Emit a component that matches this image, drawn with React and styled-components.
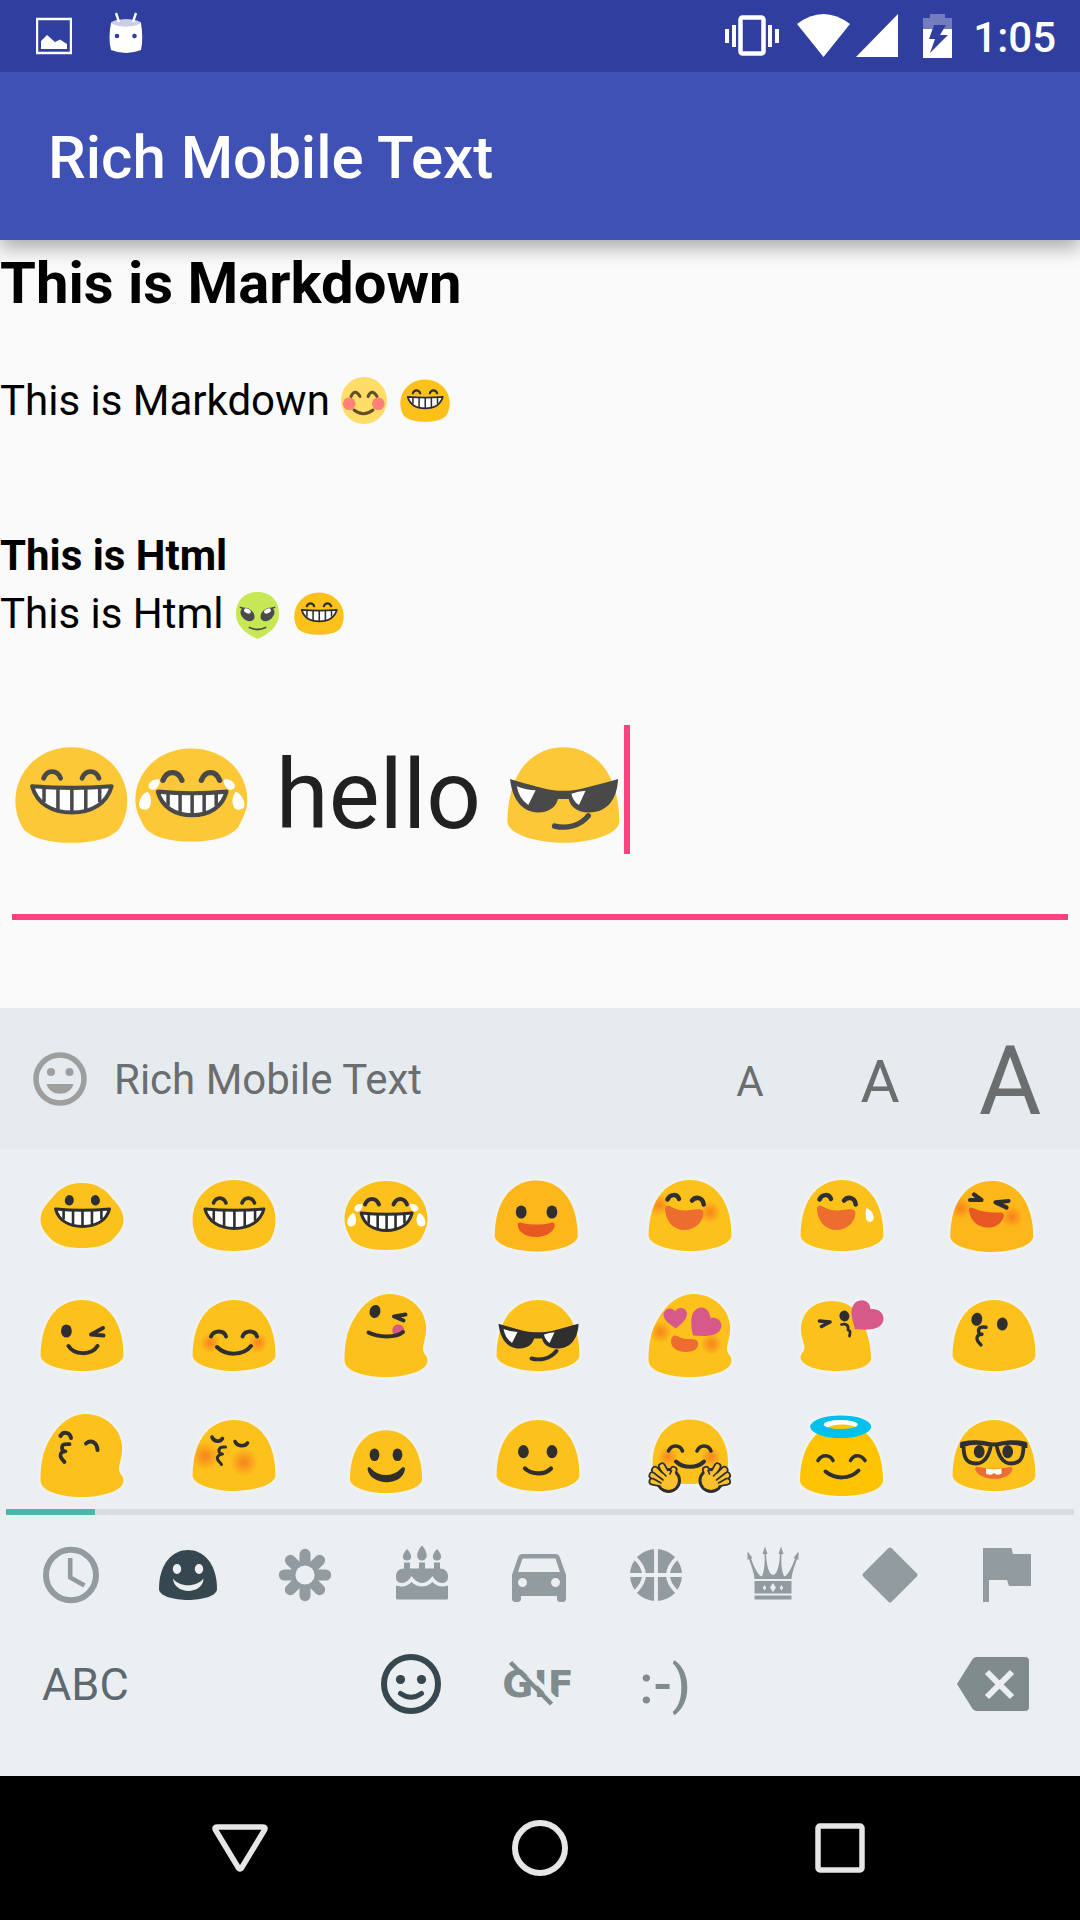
import React from "react";
import styled, { createGlobalStyle, css } from "styled-components";

const GlobalStyle = createGlobalStyle`
  * { box-sizing: border-box; }
  body { margin: 0; background: #fafafa; font-family: Roboto, "Noto Sans", sans-serif; }
  h1, h2, h3, p { margin: 0; }
`;

const INK = "#2f2f2f";
const BODY = "#fdc11b";
const BODY_WARM = "#fdb71a";

/* ---------- layout ---------- */

const Screen = styled.div`
  min-height: 100vh;
  display: flex;
  flex-direction: column;
`;

const StatusBar = styled.header`
  position: relative;
  z-index: 1;
  display: flex;
  align-items: center;
  justify-content: space-between;
  height: 72px;
  padding: 0 24px 0 36px;
  background: #303f9f;
  color: #fff;
`;

const StatusGroup = styled.div`
  display: flex;
  align-items: center;
  gap: ${(p) => p.$gap}px;
  svg { display: block; }
`;

const Clock = styled.time`
  padding-top: 3px;
  font-size: 42px;
  font-weight: 500;
  line-height: 72px;
`;

const AppBar = styled.div`
  position: relative;
  display: flex;
  align-items: center;
  height: 168px;
  padding: 4px 48px 0;
  background: #3f51b5;
  box-shadow: 0 8px 18px rgba(0, 0, 0, 0.32);
`;

const AppTitle = styled.h1`
  color: #fff;
  font-size: 60px;
  font-weight: 500;
  line-height: 72px;
`;

const Content = styled.main`
  flex: 1;
  padding-top: 8px;
  color: #000;
`;

const MarkdownBlock = styled.section`
  display: flex;
  flex-direction: column;
  gap: 54px;
  margin-bottom: 97px;
`;

const MarkdownHeading = styled.h2`
  font-size: 58px;
  font-weight: 700;
  line-height: 70px;
`;

const HtmlBlock = styled.section`
  margin-bottom: 82px;
`;

const HtmlHeading = styled.h3`
  font-size: 42px;
  font-weight: 700;
  line-height: 58px;
`;

const Line = styled.p`
  display: flex;
  align-items: center;
  gap: 10px;
  font-size: 42px;
  line-height: 58px;
  svg { display: block; }
`;

const Field = styled.label`
  display: flex;
  align-items: center;
  height: 195px;
  margin: 0 12px;
  padding-bottom: 49px;
  border-bottom: 6px solid #ff4081;
  svg { display: block; flex: none; opacity: 0.87; }
`;

const FieldInput = styled.input`
  width: 252px;
  height: 140px;
  padding: 0;
  border: 0;
  outline: 0;
  background: none;
  color: #212121;
  font: 400 96px Roboto, "Noto Sans", sans-serif;
`;

const Caret = styled.span`
  align-self: flex-start;
  width: 6px;
  height: 129px;
  background: #ff4081;
`;

const Keyboard = styled.section`
  background: #ebeff2;
  padding-bottom: 43px;
`;

const reset = css`
  display: flex;
  align-items: center;
  justify-content: center;
  margin: 0;
  padding: 0;
  border: 0;
  background: none;
  font-family: inherit;
  svg { display: block; }
`;

const SuggestionBar = styled.div`
  display: flex;
  align-items: center;
  height: 141px;
  padding: 0 5px 0 33px;
  background: #e5ebef;
  color: #6b6d6f;
`;

const AppName = styled.span`
  flex: 1;
  margin-left: 27px;
  padding-top: 2px;
  font-size: 42px;
  line-height: 58px;
`;

const SizeButton = styled.button`
  ${reset}
  width: 130px;
  height: 141px;
  padding-top: 5px;
  color: #6b6d6f;
  font-size: ${(p) => p.$size}px;
`;

const EmojiGrid = styled.div`
  display: grid;
  grid-template-columns: repeat(7, 1fr);
  grid-auto-rows: 120px;
  padding: 0 10px 0 6px;
`;

const EmojiKey = styled.button`
  ${reset}
  svg { filter: drop-shadow(0 0 3px rgba(255, 255, 255, 0.6)); }
`;

const PageTrack = styled.div`
  display: flex;
  height: 6px;
  margin: 0 6px;
  background: #dadddf;
`;

const PageThumb = styled.div`
  flex: 0 0 calc(100% / 12);
  background: #4bb6ac;
`;

const CategoryBar = styled.nav`
  display: grid;
  grid-template-columns: repeat(9, 1fr);
  height: 120px;
  padding: 0 14px 0 12px;
`;

const CategoryButton = styled.button`
  ${reset}
  color: ${(p) => (p.$active ? "#37474f" : "#929ba0")};
`;

const ModeBar = styled.div`
  display: grid;
  grid-template-columns: 1fr auto 1fr;
  align-items: center;
  height: 98px;
  padding: 0 46px 0 42px;
`;

const ModeGroup = styled.div`
  display: flex;
`;

const ModeButton = styled.button`
  ${reset}
  position: relative;
  width: 127px;
  height: 98px;
  color: ${(p) => (p.$active ? "#37474f" : "#808b8e")};
  font-size: 54px;
  font-weight: 500;
`;

const GifButton = styled(ModeButton)`
  font-family: "DejaVu Sans", sans-serif;
  font-size: 38px;
  font-weight: 700;
`;

const Slash = styled.svg`
  position: absolute;
  inset: 0;
`;

const EdgeButton = styled.button`
  ${reset}
  justify-self: ${(p) => p.$side};
  height: 98px;
  color: ${(p) => p.$color};
  font-size: 45px;
`;

const NavBar = styled.nav`
  display: flex;
  justify-content: center;
  height: 144px;
  background: #000;
`;

const NavButton = styled.button`
  ${reset}
  width: 300px;
  color: #e6e6e6;
`;

const Defs = styled.svg`
  position: absolute;
`;

/* ---------- emoji parts ---------- */

const DOME = "M0 -29C21 -29 41 -13 41.5 26C41.5 36 19 42 0 42C-19 42 -41.5 36 -41.5 26C-41 -13 -21 -29 0 -29Z";
const ROUND = "M0 -29C25 -29 41.5 -10 41.5 11C41.5 19 39 26 36 31C30 39 15 42 0 42C-15 42 -30 39 -36 31C-39 26 -41.5 19 -41.5 11C-41.5 -10 -25 -29 0 -29Z";
const LEAN = "M3 -35C24 -35 39 -20 40 -3C41 6 37 14 37 20C37 25 41.5 26 41.5 32C41 42 20 48 0 48C-22 48 -41 42 -41.5 32C-41.5 14 -39 2 -32 -10C-23 -26 -10 -35 3 -35Z";

const Dome = ({ fill = BODY }) => <path d={DOME} fill={fill} />;
const Eye = ({ x, y, rx = 5.4, ry = 6.6, tilt = 0 }) => (
  <ellipse cx={x} cy={y} rx={rx} ry={ry} fill={INK} transform={`rotate(${tilt} ${x} ${y})`} />
);
const Stroke = ({ d, w = 4 }) => (
  <path d={d} fill="none" stroke={INK} strokeWidth={w} strokeLinecap="round" strokeLinejoin="round" />
);
const Blush = ({ x, y, r = 11, within = "dome" }) => (
  <circle cx={x} cy={y} r={r} fill="url(#blush)" clipPath={`url(#${within})`} />
);

const SharedDefs = () => (
  <Defs width="0" height="0" aria-hidden="true">
    <defs>
      <radialGradient id="blush">
        <stop offset="0.15" stopColor="#f4661f" stopOpacity="0.58" />
        <stop offset="1" stopColor="#f4661f" stopOpacity="0" />
      </radialGradient>
      <clipPath id="dome"><path d={DOME} /></clipPath>
      <clipPath id="lean"><path d={LEAN} /></clipPath>
    </defs>
  </Defs>
);

const Teeth = ({ x = 0, y = 0, w = 30, h = 20 }) => {
  const at = (k) => x + k * w;
  return (
    <g stroke={INK} strokeWidth="3" strokeLinejoin="round">
      <path
        d={`M${at(-1)} ${y}Q${x} ${y + 2.4} ${at(1)} ${y}C${at(0.88)} ${y + h * 0.66} ${at(0.5)} ${y + h} ${x} ${y + h}C${at(-0.5)} ${y + h} ${at(-0.88)} ${y + h * 0.66} ${at(-1)} ${y}Z`}
        fill="#fff"
      />
      <path
        fill="none"
        strokeWidth="2.6"
        d={`M${x} ${y + 1}V${y + h}M${at(0.35)} ${y + 1}V${y + h * 0.92}M${at(-0.35)} ${y + 1}V${y + h * 0.92}M${at(0.7)} ${y + 1}V${y + h * 0.6}M${at(-0.7)} ${y + 1}V${y + h * 0.6}`}
      />
    </g>
  );
};

const Grin = () => (
  <g>
    <path d={ROUND} fill={BODY} />
    <Stroke w={3.6} d="M-20.5 -6C-18 -12.5 -10.5 -12.5 -8 -6M8 -6C10.5 -12.5 18 -12.5 20.5 -6" />
    <Teeth x={0.4} y={0} w={29.5} h={19.5} />
  </g>
);

const Tears = () => (
  <g fill="#fff">
    <path d="M-23.5 -5C-23 -1 -26 3 -29 2.6C-32 2 -32.5 -1 -30.5 -3C-29 -4.5 -26 -5.5 -23.5 -5Z" />
    <path d="M-32.4 4C-30 6 -29 12 -31 15.5C-33 18.5 -38.5 18 -38.8 14C-39 10 -36 5 -32.4 4Z" />
  </g>
);

const Joy = () => (
  <g>
    <path d="M0 -28C25 -28 41.5 -10 41.5 10C41.5 18 38 24 35 30C29 38 15 41 0 41C-15 41 -29 38 -35 30C-38 24 -41.5 18 -41.5 10C-41.5 -10 -25 -28 0 -28Z" fill={BODY} />
    <Stroke d="M-21 -4.5C-18 -12 -10 -12 -7 -4.5M7.5 -4.5C10.5 -12 18 -12 21 -4.5" />
    <Teeth x={0.6} y={4} w={25.5} h={17.5} />
    <Tears />
    <g transform="translate(0.6 0) scale(-1 1)"><Tears /></g>
  </g>
);

const Cool = () => (
  <g>
    <Dome />
    <path d="M-39.5 -5.3C-25 -1 -12 3 -4 3.3H4C12 3 25 -1 40.6 -5.3C40 8 34 19.5 19 19.5C9 19.5 5 14 4 9.5H-4C-5 14 -9 19.5 -19 19.5C-30 19.5 -38 10 -39.5 -5.3Z" fill={INK} />
    <path d="M-34.5 0Q-27 3 -20.5 3L-26 14Q-33 9 -34.5 0ZM6 5.5Q11 3.6 16.5 3.3L11.6 14Q7 11 6 5.5Z" fill="#fff" />
    <Stroke d="M-6.5 29.5C2 31.5 12 30 18.5 22" />
  </g>
);

const LaughEyes = () => (
  <Stroke w={4.5} d="M-22.5 -9.5C-20 -15 -13 -15.5 -11 -10M2 -8.5C6 -13 13 -11.5 13.7 -4.5" />
);
const LaughMouth = ({ fill = "#ed6c30" }) => (
  <path d="M-25 0C-25.5 -4 -21 -4 -18.5 -2C-13 1.5 -5 2 1 1C6 0.5 13 -1.5 13.5 4C13 14 4 21 -5.5 21C-16 21 -24.5 13 -25 0Z" fill={fill} />
);

const KISS = "M-8 -1.8C-13 -2.4 -15.5 -1.5 -15.5 2C-15.5 5 -13 5.3 -12 5.3C-15.5 5.6 -17.5 7 -17 10C-16.5 13 -14.5 14 -13 16";
const FINGERS = "M-20 32L-28 17.5M-24 32L-35 21M-24 33L-37.5 26.5M-24 35L-37.5 32.5M-20 30L-16.5 21";

const Hand = () => (
  <g strokeLinecap="round" fill="none">
    <path stroke={INK} strokeWidth="8" d={FINGERS} />
    <circle cx="-21.5" cy="31.5" r="12.5" fill={INK} />
    <circle cx="-21.5" cy="31.5" r="9.5" fill="#fbc02d" />
    <path stroke="#fbc02d" strokeWidth="4.6" d={FINGERS} />
    <path stroke={INK} strokeWidth="1.6" d="M-24 27L-32 19M-27 31L-36 24M-29 34L-37 29.5M-20 25L-18.5 21.5" />
  </g>
);

const FACES = [
  ["grinning", <g>
    <path d="M0 -26C14 -26 23 -20 30 -11C37 -3 41.5 2 41.5 11C41.5 18 37 24 31 30C24 37 12 39 0 39C-12 39 -24 37 -31 30C-37 24 -41.5 18 -41.5 11C-41.5 2 -37 -3 -30 -11C-23 -20 -14 -26 0 -26Z" fill={BODY} />
    <Eye x={-12.7} y={-8.7} rx={4.5} ry={5.2} tilt={8} /><Eye x={13.4} y={-8.7} rx={4.5} ry={5.2} tilt={-8} />
    <Teeth x={0.5} y={0} w={27} h={17.5} />
  </g>],
  ["beaming", <Grin />],
  ["tears of joy", <Joy />],
  ["open mouth smile", <g transform="translate(-1.8 0.5)">
    <Dome fill={BODY_WARM} /><Eye x={-15} y={2.5} /><Eye x={15.7} y={2.5} />
    <path d="M-18.5 15.5C-18.5 12.5 -16 13 -14 13.5C-5 15.5 5 15.5 14 13.5C17 12.5 18.5 13 18.5 16C18 22 10 27.5 0 27.5C-10 27.5 -18 23 -18.5 15.5Z" fill="#e85822" />
  </g>],
  ["laughing with blush", <g><Dome /><Blush x={-31} y={-4} /><Blush x={20} y={3.3} /><LaughEyes /><LaughMouth /></g>],
  ["sweat smile", <g><Dome /><LaughEyes /><LaughMouth />
    <path d="M24.5 -1C30 1.5 32.5 6 31.5 10C30.5 14 25 14 24 9.5C24 6 23 2 24.5 -1Z" fill="#fff" /></g>],
  ["squinting laugh", <g transform="translate(-2.3 1)"><Dome fill={BODY_WARM} />
    <Blush x={-31} y={-1.7} /><Blush x={20.3} y={7} />
    <Stroke w={4.2} d="M-17.7 -15.5L-10.2 -10L-21.7 -10M16.8 -9L3.8 -7.7L14.8 -2.5" />
    <path d="M-22.7 0C-22.7 -3 -20.7 -3 -18.7 -2C-9.7 2 -0.7 3 7.3 2.5C11.3 2 12.8 4 11.8 7C9.3 15 2.3 18 -4.7 17.5C-14.7 17 -21.7 10 -22.7 0Z" fill="#e85822" /></g>],
  ["wink", <g><Dome /><Eye x={-15.6} y={2} /><Stroke w={4} d="M21 -1L9 5.5L21.5 6.5" />
    <Stroke d="M-13.5 17C-8 26 9 27 15.5 17" /></g>],
  ["blushing smile", <g><Dome /><Blush x={-24} y={14} r={10} /><Blush x={24} y={14} r={10} />
    <Stroke d="M-23 7.5C-20 0.8 -10 1 -8 7.5M8.5 7.5C11 0.8 21 1 23 7.5" /><Stroke d="M-17 18C-8 27 9 27 17 17" /></g>],
  ["tongue out", <g><path d={LEAN} fill={BODY} /><Eye x={-11} y={-17.5} tilt={15} /><Stroke w={4} d="M19.5 -14.5L8 -12.5L17.5 -8.5" />
    <circle cx="12.3" cy="1.5" r="6" fill="#d6598a" /><path d="M-18 6L0 9L19 3V10H-18Z" fill={BODY} /><Stroke d="M-17.5 3.5C-8 8.5 10 9 17 3" /></g>],
  ["sunglasses", <Cool />],
  ["heart eyes", <g><path d={LEAN} fill={BODY} /><Blush x={-29.5} y={3} within="lean" /><Blush x={21.5} y={15} within="lean" />
    <path d="M-14 -0.5C-19 -4 -26 -8 -26.5 -14C-26.5 -20 -18.5 -23 -15 -17.5C-12 -23 -4 -21.5 -3 -16C-3 -9 -9 -5 -14 -0.5Z" fill="#d6598a" />
    <path d="M3 6.5C1 -2 0.5 -11 3 -16C7 -24 19 -24 20.5 -11C30 -13 35 -3 28.5 3C23 8 12 7 3 6.5Z" fill="#d6598a" />
    <path d="M-19 12C-18 6 -15 5 -10 8.5C-4 11 0 9.5 5 10.5C10 12 8.5 18 5 21C-3 25 -19 23 -19 12Z" fill="#ed6c30" /></g>],
  ["blowing a kiss", <g>
    <path d="M-10 -28C10 -28 20 -14 24 1C27 11 29 19 29 30C28 38 12 42 -6 42C-22 42 -39 38 -41.5 29C-41.5 24 -37 22 -37.5 18C-38 13 -41 8 -41 1C-41 -17 -28 -28 -10 -28Z" fill={BODY} />
    <path d="M12.5 0C13 -3 9 -11 9.5 -17C10 -32 28 -32 28.5 -20C38 -21 44 -14 40.5 -6C36 2 22 1 12.5 0Z" fill="#d6598a" />
    <Eye x={2.4} y={-13} rx={5} ry={5.4} tilt={-10} /><Stroke w={3.6} d="M-22.5 -8L-12 -7L-20.5 -2.5" />
    <Stroke w={2.8} d="M-0.5 -4.5C4 -5.5 7 -4 6 1C9 1.5 8 4 7.5 7" /></g>],
  ["kissing", <g><Dome /><Eye x={-17.2} y={-9.7} tilt={12} /><Eye x={8.3} y={-5} tilt={5} /><Stroke w={3.4} d={KISS} /></g>],
  ["kissing, smiling eyes", <g><path d={LEAN} fill={BODY} />
    <Stroke d="M-21.5 -13C-19 -18 -12 -17 -11 -11M4 -5.5C9 -9.5 15 -7 15.5 1" />
    <g transform="translate(-4.5 -3)"><Stroke w={3.8} d={KISS} /></g></g>],
  ["kissing, closed eyes", <g><Dome /><Blush x={-28.6} y={7} r={14} /><Blush x={10} y={13.3} r={14} />
    <Stroke w={3.6} d="M-22 -12C-20 -7 -14 -6.5 -11.5 -10.5M1 -7.5C3 -2.5 11 -2 13.5 -6" />
    <Stroke w={3} d="M-8.5 -2C-13 -2.5 -15.5 -1 -15 2.5C-14 5 -13 5 -11.5 5C-15 5.5 -17 7 -16.5 10C-15.5 13 -14 13 -12.5 15.5" /></g>],
  ["small smile", <g><g transform="translate(0 7) scale(0.87 0.885)"><Dome /></g><Eye x={-11.5} y={5.7} rx={4.9} ry={6.3} /><Eye x={11.5} y={5.7} rx={4.9} ry={6.3} />
    <path d="M-18.5 20C-18 17.5 -16 18 -14.5 20C-7 28 7 28 14.5 20C16 18 19 17.5 19 20C17 38 -16 37 -18.5 20Z" fill={INK} /></g>],
  ["slight smile", <g><Dome /><Eye x={-14.6} y={2.7} /><Eye x={14} y={2.7} /><Stroke w={4.2} d="M-13 19.5C-6 26 7 26 13 19.5" /></g>],
  ["hugging", <g>
    <path d="M0 -29.5C24 -29.5 38 -10 38 14V24C38 32 18 35 0 35C-18 35 -37 32 -37.5 24V14C-37 -10 -24 -29.5 0 -29.5Z" fill={BODY} />
    <Blush x={-22} y={8} r={10} /><Blush x={21} y={8} r={10} />
    <Stroke w={3.6} d="M-21.5 2C-18.5 -5 -10 -4.5 -7.5 2M7 2C10 -5 18.5 -4.5 21 2" /><Stroke d="M-14 12.5C-7 19.5 7 19.5 14 12.5" />
    <Hand /><g transform="translate(-0.5 0) scale(-1 1)"><Hand /></g></g>],
  ["halo", <g>
    <ellipse cx="-1.3" cy="-23.5" rx="20" ry="7" fill="#fff" />
    <path d="M0 -24.5C25 -24.5 41 -3 41 32C40 42 18 47 0 47C-18 47 -41 42 -42 32C-42 -3 -25 -24.5 0 -24.5Z" fill="#fec400" />
    <path fillRule="evenodd" fill="#00c1ec" d="M-31.8 -22.3A30.5 11.3 0 1 1 29.2 -22.3A30.5 11.3 0 1 1 -31.8 -22.3ZM-18.3 -24.5A17 4.6 0 1 0 15.7 -24.5A17 4.6 0 1 0 -18.3 -24.5Z" />
    <Stroke w={3.6} d="M-24 11.5C-20 5 -12 5.5 -9 11.5M8.5 11.5C12 5 19 5.5 23 11.5" /><Stroke d="M-16.5 22.5C-7 30.5 8 30.5 16.5 21.5" /></g>],
  ["nerd", <g><Dome /><Eye x={-14.8} y={2.7} /><Eye x={13.7} y={2.7} />
    <g fill="none" stroke={INK} strokeWidth="3.8" strokeLinejoin="round">
      <path d="M-30.5 -4C-22 -7.5 -10 -6.5 -3 -4C-5 7 -9 14.5 -18 14.5C-28 14.5 -30.5 8 -30.5 -4ZM29.5 -4C21 -7.5 9 -6.5 2.5 -4C4.5 7 9 14.5 17 14.5C27 14.5 29.5 8 29.5 -4Z" />
      <path d="M-32 -1V-5.5C-20 -8 -10 -6.5 -4 -5Q0 -4 4 -5C10 -6.5 20 -8 31.5 -5.5V-1" />
    </g>
    <path d="M-19 20C-19 17.5 -16 17.5 -13 18.5Q0 21 13 18.5C16 17.5 18.5 17.5 18.5 20.5C15 33 -15 33 -19 20Z" fill="#ed6c30" />
    <path d="M-8 19.6Q0 21 7.5 19.6V24.5Q7 26 2 25.5L0 24L-2 25.5Q-7.5 26 -8 24.5Z" fill="#fff" /></g>],
];

const Inline = ({ children, label, size = 50, box = "-42 -35 84 84" }) => (
  <svg width={size} height={size} viewBox={box} role="img" aria-label={label}>{children}</svg>
);

const RoundBlush = () => (
  <Inline label="Blushing" box="0 0 50 50">
    <ellipse cx="24" cy="24.5" rx="23" ry="23.5" fill="#ffdd67" />
    <path d="M11 20.5Q15 12 20 20.5M28 20.5Q32 12 37 20.5" fill="none" stroke="#664e27" strokeWidth="3" strokeLinecap="round" />
    <path d="M14 34Q23.5 41.5 33 34" fill="none" stroke="#664e27" strokeWidth="3" strokeLinecap="round" />
    <circle cx="9.2" cy="27.7" r="6.3" fill="#ff8178" /><circle cx="38.3" cy="27.7" r="6.3" fill="#ff8178" />
  </Inline>
);

const Alien = () => (
  <Inline label="Alien" box="0 0 50 50">
    <path d="M23.5 3C37 3 45 12 45 25C45 37 35 45 23.5 50C12 45 2 37 2 25C2 12 10 3 23.5 3Z" fill="#c7e755" />
    <g fill="#4a4a4f">
      <ellipse cx="13.5" cy="25.5" rx="8" ry="5.6" transform="rotate(42 13.5 25.5)" />
      <ellipse cx="33.5" cy="25.5" rx="8" ry="5.6" transform="rotate(-42 33.5 25.5)" />
    </g>
    <path d="M6.5 18.5L13.5 20.5M40.5 18.5L33.5 20.5M15.5 38.5Q23.5 42.5 31.5 38.5" fill="none" stroke="#4a4a4f" strokeWidth="1.8" strokeLinecap="round" />
    <ellipse cx="13.5" cy="22" rx="3.6" ry="2.2" fill="#fff" transform="rotate(25 13.5 22)" />
    <ellipse cx="33.5" cy="22" rx="3.6" ry="2.2" fill="#fff" transform="rotate(-25 33.5 22)" />
  </Inline>
);

/* ---------- categories ---------- */

const PAPER = "#ebeff2";
const CATEGORIES = [
  ["Recent", <g fill="none" stroke="currentColor"><ellipse rx="25" ry="25.2" strokeWidth="6" /><path d="M-0.8 -17V2.5L13.5 10.5" strokeWidth="4.6" /></g>],
  ["Smileys", <g><path d="M0 -25C15 -25 29 -12 29 14C29 21 14 25 0 25C-14 25 -29 21 -29 14C-29 -12 -15 -25 0 -25Z" fill="currentColor" />
    <ellipse cx="-11" cy="-6" rx="4.2" ry="5" fill={PAPER} /><ellipse cx="11" cy="-6" rx="4.2" ry="5" fill={PAPER} />
    <path d="M-15 3.5C-9 12.5 9 12.5 15.5 3.5C15 20 -14 20 -15 3.5Z" fill={PAPER} /></g>],
  ["Nature", <g>{[0, 45, 90, 135, 180, 225, 270, 315].map((a) => (
    <path key={a} d="M0 -10V-20.7" stroke="currentColor" strokeWidth="11" strokeLinecap="round" transform={`rotate(${a})`} />))}
    <circle r="9.6" fill={PAPER} /></g>],
  ["Food", <g fill="currentColor">
    <path d="M-15 -26C-8.5 -19 -10.5 -14.5 -15 -14.5C-19.5 -14.5 -21.5 -19 -15 -26ZM0 -29.5C7.5 -21 5 -14.5 0 -14.5C-5 -14.5 -7.5 -21 0 -29.5ZM15 -26C21.5 -19 19.5 -14.5 15 -14.5C10.5 -14.5 8.5 -19 15 -26Z" />
    <path d="M-18 -12.5H-12V-6.5H-3V-12.5H3V-6.5H12V-12.5H18V-6.5C23 -6.5 26 -3 26 1C26 5 25.5 7.5 20 8C16 8 13 5 10.5 1C7.5 5 4 8 0 8C-4 8 -7.5 5 -10.5 1C-13 5 -16 8 -20 8C-25.5 7.5 -26 5 -26 1C-26 -3 -23 -6.5 -18 -6.5Z" />
    <path d="M-26 10.5C-18 13 -15 11 -10.5 7C-4 13 4 13 10.5 7C15 11 18 13 26 10.5V23Q26 24.5 24.5 24.5H-24.5Q-26 24.5 -26 23Z" /></g>],
  ["Travel", <path transform="translate(-36 -36) scale(3)" fill="currentColor" d="M18.92 6.01C18.72 5.42 18.16 5 17.5 5h-11c-.66 0-1.21.42-1.42 1.01L3 12v8c0 .55.45 1 1 1h1c.55 0 1-.45 1-1v-1h12v1c0 .55.45 1 1 1h1c.55 0 1-.45 1-1v-8l-2.08-5.99zM6.5 16c-.83 0-1.5-.67-1.5-1.5S5.67 13 6.5 13s1.5.67 1.5 1.5S7.33 16 6.5 16zm11 0c-.83 0-1.5-.67-1.5-1.5s.67-1.5 1.5-1.5 1.5.67 1.5 1.5-.67 1.5-1.5 1.5zM5 11l1.5-4.5h11L19 11H5z" />],
  ["Activity", <g><circle r="26" fill="currentColor" /><path d="M0 -27V27M-27 0H27M-22 -18Q-2 0 -22 18M22 -18Q2 0 22 18" fill="none" stroke={PAPER} strokeWidth="3.8" /></g>],
  ["Objects", <g fill="currentColor">
    <path d="M-18.5 4C-19 -3 -22 -10 -24 -16L-25.5 -15L-25.5 -23.5L-20.5 -17L-22 -16.5C-19 -8 -15 0 -11.5 1.5C-8.5 -2 -8 -14 -8.5 -21H-10.5L-8 -28.5L-5.5 -21H-7C-6.5 -10 -4 0 0 0C4 0 6.5 -10 7 -21H5.5L8 -28.5L10.5 -21H8.5C8 -14 8.5 -2 11.5 1.5C15 0 19 -8 22 -16.5L20.5 -17L25.5 -23.5V-15L24 -16C22 -10 19 -3 18.5 4Z" />
    <path d="M-18.5 6H18.5V18.5H-18.5ZM-18.5 20.5H18.5V24.5H-18.5Z" />
    <path fill={PAPER} d="M0 8L3 12.5L0 17L-3 12.5ZM-8.5 10L-6.8 12.8L-8.5 15.5L-10.2 12.8ZM8.5 10L10.2 12.8L8.5 15.5L6.8 12.8Z" /></g>],
  ["Symbols", <path d="M0 -25.5L25.5 0L0 25.5L-25.5 0Z" fill="currentColor" stroke="currentColor" strokeWidth="4" strokeLinejoin="round" />],
  ["Flags", <path d="M-24 -27H4.5L6 -21H24V11H2L0 5H-18V27H-24Z" fill="currentColor" />],
];

export default function App() {
  return (
    <Screen>
      <GlobalStyle />
      <SharedDefs />
      <StatusBar>
        <StatusGroup $gap={37}>
          <svg width="36" height="72" viewBox="0 0 36 72">
            <path d="M1 19H35V53H1Z" fill="none" stroke="#fff" strokeWidth="2.4" />
            <path d="M5 49V41L11 35L19 42L24 39.5L31 44V49Z" fill="#fff" />
          </svg>
          <svg width="34" height="72" viewBox="0 0 34 72">
            <path d="M2 23Q17 16 32 23Q34.5 38 32 50Q17 56 2 50Q-1 38 2 23Z" fill="#fff" />
            <path d="M2 22.5C6 18 28 18 32 22.5C28 28 6 28 2 22.5Z" fill="#c9cde6" />
            <path d="M7 13L10 22M27 13L24 22" stroke="#fff" strokeWidth="2.4" />
            <circle cx="8" cy="36" r="2.3" fill="#303f9f" /><circle cx="25.5" cy="36" r="2.3" fill="#303f9f" />
          </svg>
        </StatusGroup>
        <StatusGroup $gap={6}>
          <svg width="66" height="72" viewBox="0 0 66 72">
            <path fill="#fff" d="M0 29H4V43H0ZM7 25H11V47H7ZM43 25H47V47H43ZM50 29H54V43H50Z" />
            <rect x="15.5" y="17.5" width="23" height="36" rx="2" fill="none" stroke="#fff" strokeWidth="4.5" />
          </svg>
          <svg width="53" height="72" viewBox="0 0 53 72"><path d="M0 24Q26.5 4 53 24L26.5 57Z" fill="#fff" /></svg>
          <svg width="61" height="72" viewBox="0 0 61 72"><path d="M42 14V57H0Z" fill="#fff" /></svg>
          <svg width="44" height="72" viewBox="0 0 44 72">
            <path d="M7 14H22V18H29V29H0V18H7Z" fill="#747dbc" /><path d="M0 29H29V58H0Z" fill="#fff" />
            <path d="M11 25H23L17 35H25L7 53L12 39H6Z" fill="#303f9f" />
          </svg>
          <Clock>1:05</Clock>
        </StatusGroup>
      </StatusBar>
      <AppBar><AppTitle>Rich Mobile Text</AppTitle></AppBar>
      <Content>
        <MarkdownBlock>
          <MarkdownHeading>This is Markdown</MarkdownHeading>
          <Line>This is Markdown <RoundBlush /><Inline label="Grin"><Grin /></Inline></Line>
        </MarkdownBlock>
        <HtmlBlock>
          <HtmlHeading>This is Html</HtmlHeading>
          <Line>This is Html <Alien /><Inline label="Grin"><Grin /></Inline></Line>
        </HtmlBlock>
        <Field>
          <Inline label="Grin" size={120} box="-44 -38 89 89"><Grin /></Inline>
          <Inline label="Tears of joy" size={120} box="-44 -38 89 89"><Joy /></Inline>
          <FieldInput aria-label="Message" defaultValue=" hello " />
          <Inline label="Sunglasses" size={120} box="-44 -38 89 89"><Cool /></Inline>
          <Caret />
        </Field>
      </Content>
      <Keyboard>
        <SuggestionBar>
          <svg width="54" height="54" viewBox="-27 -27 54 54" fill="#9e9e9e">
            <circle r="24" fill="none" stroke="#9e9e9e" strokeWidth="5.5" />
            <circle cx="-9" cy="-7" r="4" /><circle cx="9.5" cy="-7" r="4" />
            <path d="M-13.5 5H13.5C10 18 -10 18 -13.5 5Z" />
          </svg>
          <AppName>Rich Mobile Text</AppName>
          <SizeButton $size={42} aria-label="Small text">A</SizeButton>
          <SizeButton $size={60} aria-label="Medium text">A</SizeButton>
          <SizeButton $size={96} aria-label="Large text">A</SizeButton>
        </SuggestionBar>
        <EmojiGrid>
          {FACES.map(([name, art]) => (
            <EmojiKey key={name} aria-label={name}>
              <svg width="96" height="120" viewBox="-48 -60 96 120">{art}</svg>
            </EmojiKey>
          ))}
        </EmojiGrid>
        <PageTrack><PageThumb /></PageTrack>
        <CategoryBar aria-label="Emoji categories">
          {CATEGORIES.map(([name, art], i) => (
            <CategoryButton key={name} aria-label={name} $active={i === 1}>
              <svg width="72" height="72" viewBox="-36 -36 72 72">{art}</svg>
            </CategoryButton>
          ))}
        </CategoryBar>
        <ModeBar>
          <EdgeButton $side="start" $color="#5c6a6f">ABC</EdgeButton>
          <ModeGroup>
            <ModeButton $active aria-label="Emoji">
              <svg width="60" height="60" viewBox="-30 -30 60 60" fill="currentColor">
                <circle r="27" fill="none" stroke="currentColor" strokeWidth="6" />
                <circle cx="-10.5" cy="-4.5" r="4.6" /><circle cx="10.5" cy="-4.5" r="4.6" />
                <path d="M-10.5 9.5Q0 17 10.5 9.5" fill="none" stroke="currentColor" strokeWidth="5" strokeLinecap="round" />
              </svg>
            </ModeButton>
            <GifButton>
              GIF
              <Slash width="127" height="98" viewBox="0 0 127 98" aria-hidden="true">
                <path d="M39.5 24L82.5 67" stroke={PAPER} strokeWidth="5" />
                <path d="M35.5 27.5L76.5 69" stroke="currentColor" strokeWidth="4.5" />
              </Slash>
            </GifButton>
            <ModeButton>:-)</ModeButton>
          </ModeGroup>
          <EdgeButton $side="end" $color="#808b8e" aria-label="Delete">
            <svg width="77" height="56" viewBox="0 0 77 56">
              <path d="M19 1H68Q72 1 72 5V51Q72 55 68 55H19Q17 55 15 52L0 28L15 4Q17 1 19 1Z" fill="currentColor" />
              <path d="M30 16L55 41M55 16L30 41" stroke={PAPER} strokeWidth="6" />
            </svg>
          </EdgeButton>
        </ModeBar>
      </Keyboard>
      <NavBar aria-label="System">
        <NavButton aria-label="Back">
          <svg width="56" height="56" viewBox="0 0 56 56"><path d="M5 7H51Q54 7 52.5 10L29.5 48Q28 50 26.5 48L3.5 10Q2 7 5 7Z" fill="none" stroke="currentColor" strokeWidth="5.5" strokeLinejoin="round" /></svg>
        </NavButton>
        <NavButton aria-label="Home">
          <svg width="56" height="56" viewBox="-28 -28 56 56"><circle r="25" fill="none" stroke="currentColor" strokeWidth="6" /></svg>
        </NavButton>
        <NavButton aria-label="Overview">
          <svg width="50" height="50" viewBox="0 0 50 50"><rect x="3" y="3" width="44" height="44" rx="2" fill="none" stroke="currentColor" strokeWidth="5.5" /></svg>
        </NavButton>
      </NavBar>
    </Screen>
  );
}
